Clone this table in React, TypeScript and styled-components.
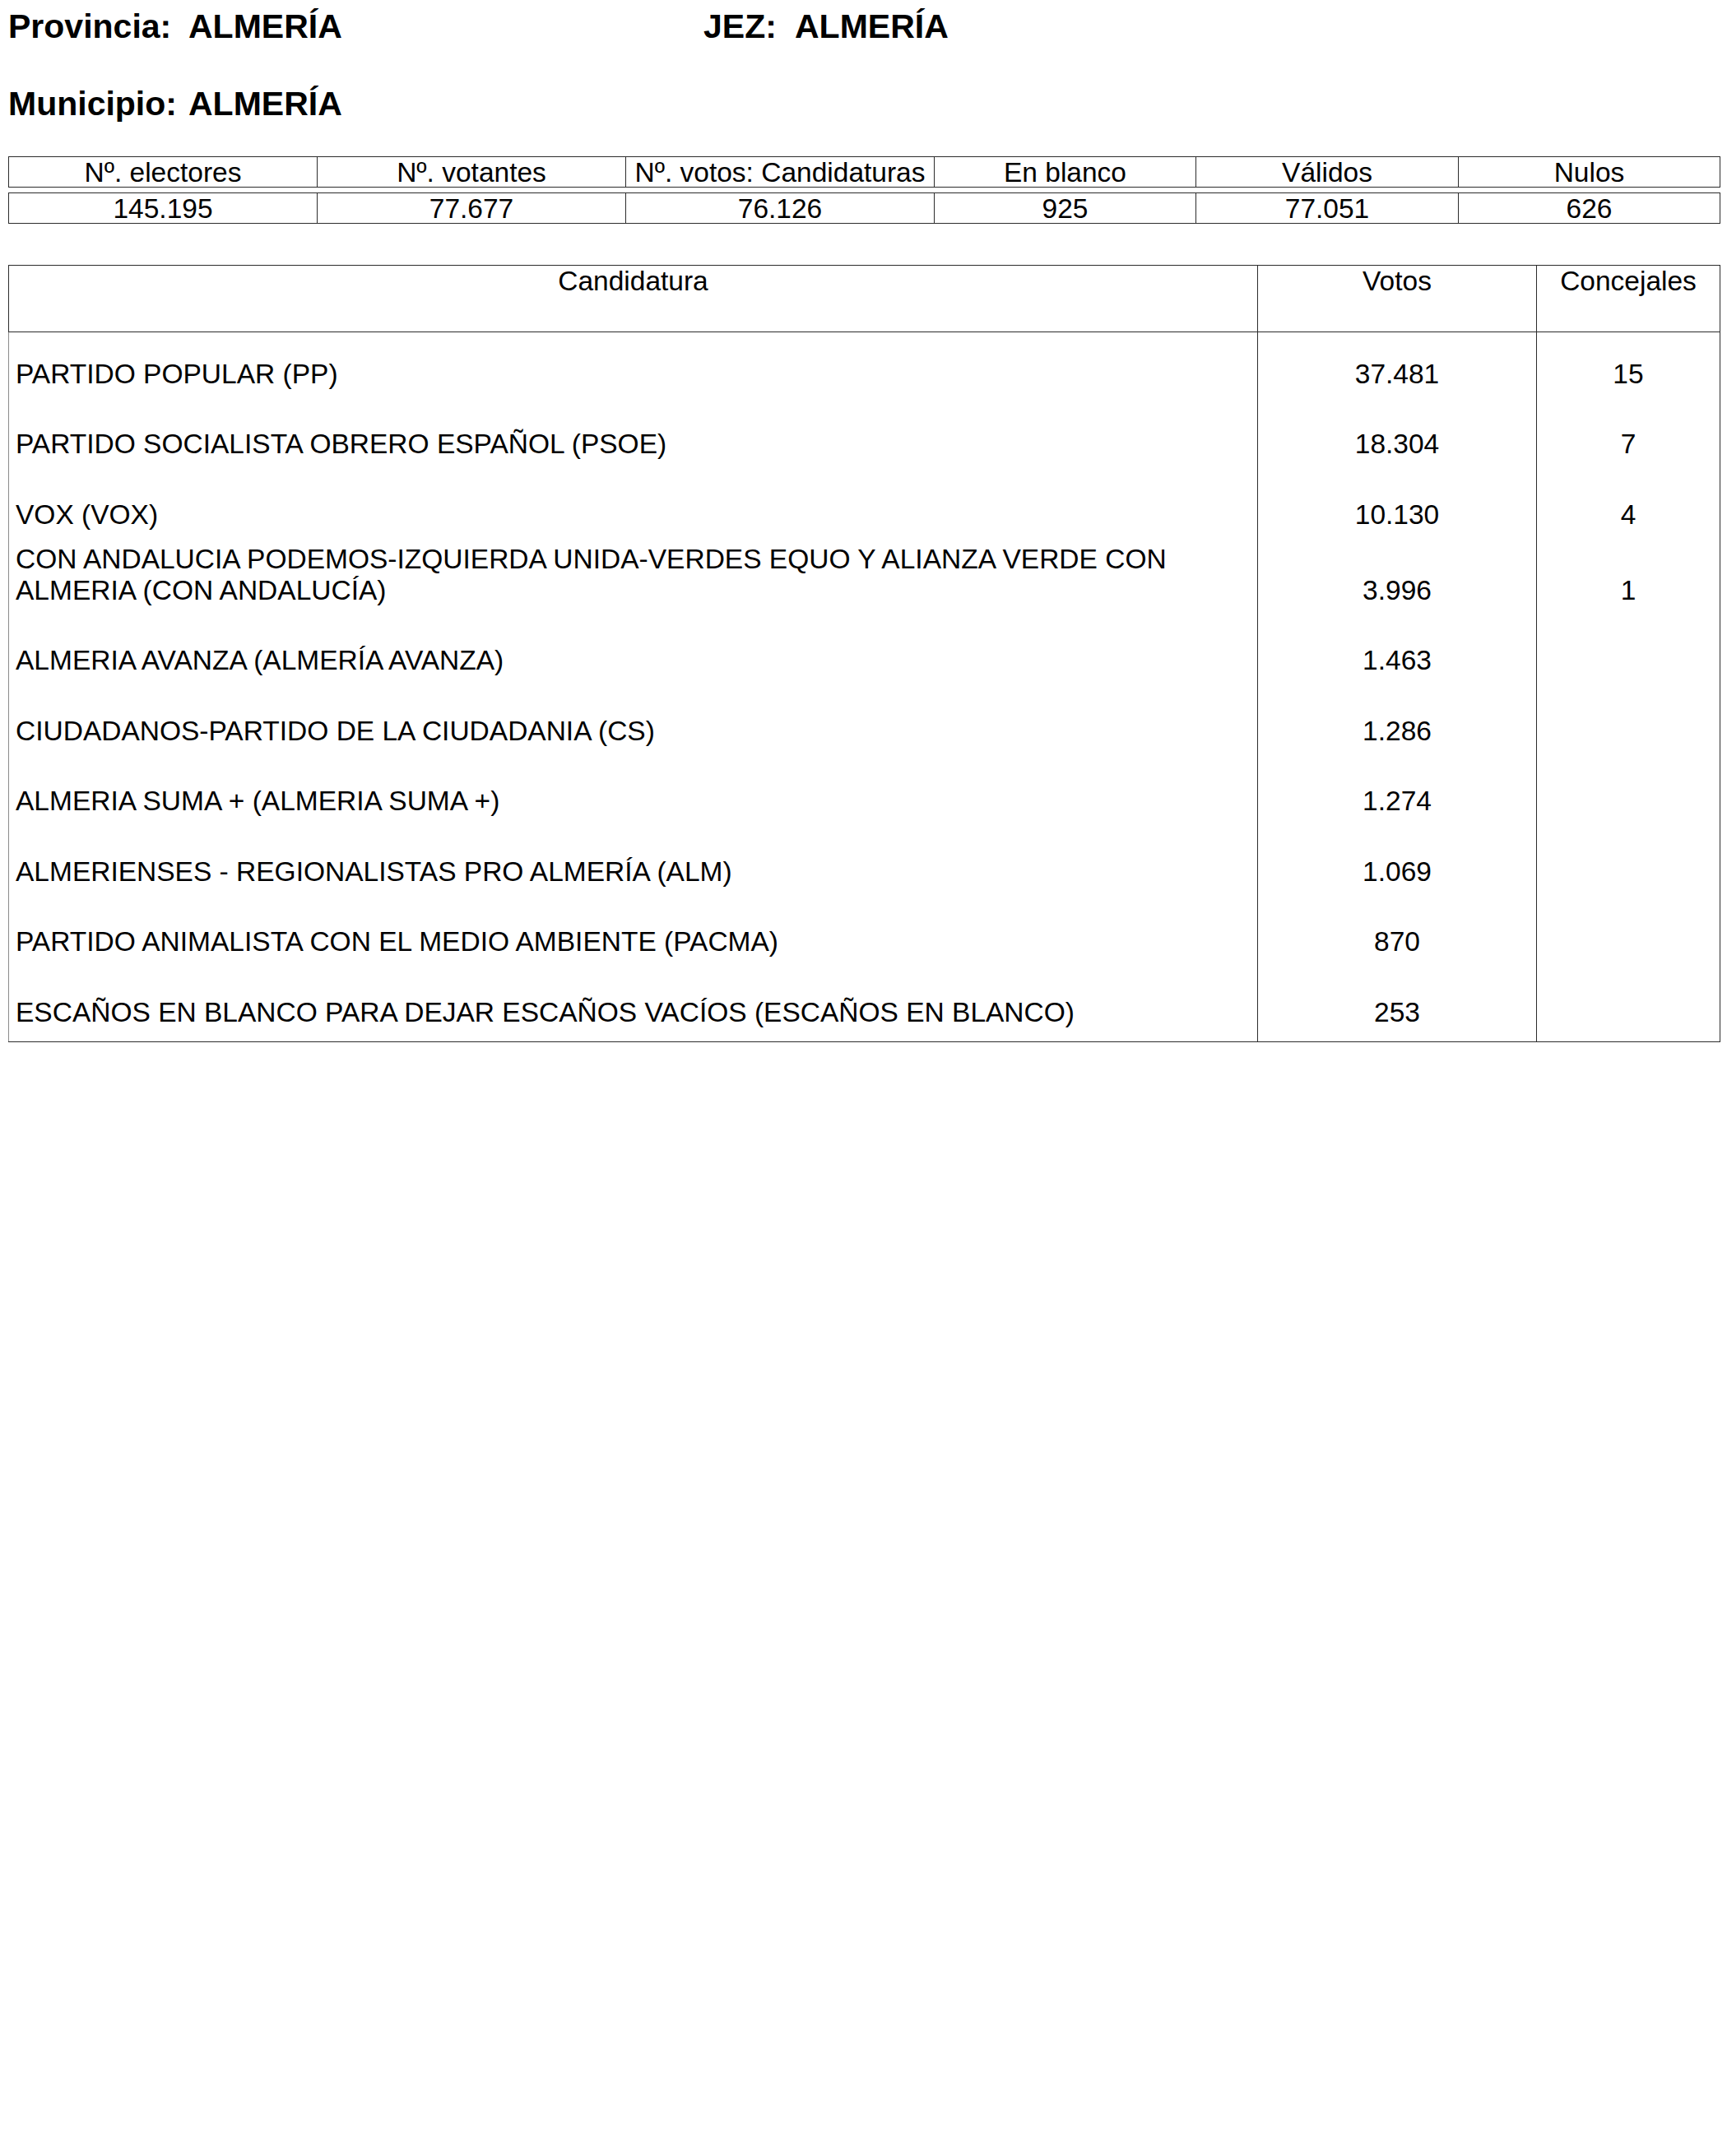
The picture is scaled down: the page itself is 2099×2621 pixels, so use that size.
import React from 'react';
import styled, { createGlobalStyle } from 'styled-components';

const GlobalStyle = createGlobalStyle`
  *, *::before, *::after { box-sizing: border-box; }
  html, body { margin: 0; padding: 0; background: #fff; }
  body {
    font-family: "Liberation Sans", Arial, sans-serif;
    color: #000;
  }
`;

const LINE = '#2c2c2c';

const Page = styled.div`
  width: 2099px;
  min-height: 2621px;
  padding: 9px 0 0 10px;
`;

const TitleLine = styled.div`
  display: flex;
  font-size: 41px;
  font-weight: 700;
  line-height: 47px;
  white-space: nowrap;
  & + & {
    margin-top: 47px;
  }
`;

const Field = styled.div<{ $width?: number }>`
  display: flex;
  width: ${(p) => (p.$width ? `${p.$width}px` : 'auto')};
`;

const Label = styled.span<{ $width: number }>`
  width: ${(p) => p.$width}px;
`;

const Summary = styled.div`
  margin-top: 40px;
  width: 2081px;
  display: flex;
  flex-direction: column;
  gap: 6px;
`;

const SummaryRow = styled.div`
  display: grid;
  grid-template-columns: 375px 375px 375px 318px 319px 318px;
  border: 1px solid ${LINE};
  border-left: none;
`;

const SummaryCell = styled.div`
  height: 36px;
  border-left: 1px solid ${LINE};
  font-size: 33.5px;
  line-height: 38px;
  text-align: center;
  white-space: nowrap;
`;

const Results = styled.div`
  margin-top: 50px;
  width: 2081px;
  border: 1px solid ${LINE};
  border-left: none;
`;

const ResultsRow = styled.div<{ $head?: boolean }>`
  display: grid;
  grid-template-columns: 1518px 339px 223px;
  border-bottom: ${(p) => (p.$head ? `1px solid ${LINE}` : 'none')};
`;

const HeadCell = styled.div`
  height: 80px;
  border-left: 1px solid ${LINE};
  font-size: 33.5px;
  text-align: center;
`;

const BodyCell = styled.div<{ $align: 'left' | 'center'; $first?: boolean }>`
  min-height: 85.5px;
  display: flex;
  align-items: flex-end;
  justify-content: ${(p) => (p.$align === 'left' ? 'flex-start' : 'center')};
  padding: 0 8px 16px;
  border-left: 1px solid ${(p) => (p.$first ? '#8c8c8c' : LINE)};
  font-size: 33.5px;
  text-align: ${(p) => p.$align};
`;

const summary = [
  { label: 'Nº. electores', value: '145.195' },
  { label: 'Nº. votantes', value: '77.677' },
  { label: 'Nº. votos: Candidaturas', value: '76.126' },
  { label: 'En blanco', value: '925' },
  { label: 'Válidos', value: '77.051' },
  { label: 'Nulos', value: '626' },
];

const results = [
  { name: 'PARTIDO POPULAR (PP)', votes: '37.481', seats: '15' },
  { name: 'PARTIDO SOCIALISTA OBRERO ESPAÑOL (PSOE)', votes: '18.304', seats: '7' },
  { name: 'VOX (VOX)', votes: '10.130', seats: '4' },
  {
    name: 'CON ANDALUCIA PODEMOS-IZQUIERDA UNIDA-VERDES EQUO Y ALIANZA VERDE CON ALMERIA (CON ANDALUCÍA)',
    votes: '3.996',
    seats: '1',
  },
  { name: 'ALMERIA AVANZA (ALMERÍA AVANZA)', votes: '1.463', seats: '' },
  { name: 'CIUDADANOS-PARTIDO DE LA CIUDADANIA (CS)', votes: '1.286', seats: '' },
  { name: 'ALMERIA SUMA + (ALMERIA SUMA +)', votes: '1.274', seats: '' },
  { name: 'ALMERIENSES - REGIONALISTAS PRO ALMERÍA (ALM)', votes: '1.069', seats: '' },
  { name: 'PARTIDO ANIMALISTA CON EL MEDIO AMBIENTE (PACMA)', votes: '870', seats: '' },
  {
    name: 'ESCAÑOS EN BLANCO PARA DEJAR ESCAÑOS VACÍOS (ESCAÑOS EN BLANCO)',
    votes: '253',
    seats: '',
  },
];

export default function App() {
  return (
    <Page>
      <GlobalStyle />
      <TitleLine>
        <Field $width={845}>
          <Label $width={219}>Provincia:</Label>
          <span>ALMERÍA</span>
        </Field>
        <Field>
          <Label $width={111}>JEZ:</Label>
          <span>ALMERÍA</span>
        </Field>
      </TitleLine>
      <TitleLine>
        <Field>
          <Label $width={219}>Municipio:</Label>
          <span>ALMERÍA</span>
        </Field>
      </TitleLine>

      <Summary>
        <SummaryRow>
          {summary.map((s) => (
            <SummaryCell key={s.label}>{s.label}</SummaryCell>
          ))}
        </SummaryRow>
        <SummaryRow>
          {summary.map((s) => (
            <SummaryCell key={s.label}>{s.value}</SummaryCell>
          ))}
        </SummaryRow>
      </Summary>

      <Results>
        <ResultsRow $head>
          <HeadCell>Candidatura</HeadCell>
          <HeadCell>Votos</HeadCell>
          <HeadCell>Concejales</HeadCell>
        </ResultsRow>
        {results.map((r) => (
          <ResultsRow key={r.name}>
            <BodyCell $align="left" $first>
              {r.name}
            </BodyCell>
            <BodyCell $align="center">{r.votes}</BodyCell>
            <BodyCell $align="center">{r.seats}</BodyCell>
          </ResultsRow>
        ))}
      </Results>
    </Page>
  );
}
